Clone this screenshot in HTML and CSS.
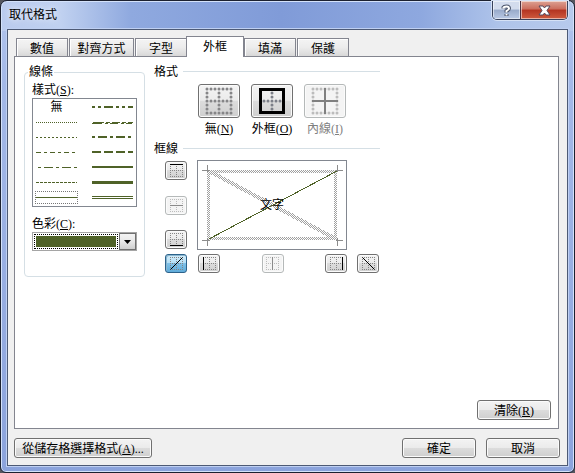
FILE: index.html
```html
<!DOCTYPE html>
<html lang="zh-Hant">
<head>
<meta charset="utf-8">
<title>取代格式</title>
<link rel="stylesheet" href="styles.css">
</head>
<body>
<svg class="defs" aria-hidden="true">
  <defs>
    <pattern id="hatch" width="2" height="2" patternUnits="userSpaceOnUse">
      <rect width="1" height="1" fill="#a0a0a0"/><rect x="1" y="1" width="1" height="1" fill="#a0a0a0"/>
    </pattern>
    <symbol id="cell" viewBox="0 0 13 13">
      <path d="M0 .5H13M0 6.5H13M0 12.5H13M.5 0V13M6.5 0V13M12.5 0V13" stroke="#858585" stroke-dasharray="1 1" fill="none"/>
    </symbol>
  </defs>
</svg>
<div class="window">
  <header class="titlebar">
    <h1>取代格式</h1>
    <div class="caption">
      <button class="help" type="button" aria-label="說明"><svg width="13" height="13" viewBox="0 0 13 13"><path d="M3.500 4.500V3.500Q4 2.500 6.500 2.500T9 4.500Q9 5.500 6.500 7V8.500M6.500 10V12" fill="none" stroke="#4c566c" stroke-width="4"/><path d="M3.500 4.500V3.500Q4 2.500 6.500 2.500T9 4.500Q9 5.500 6.500 7V8.500M6.500 10V11.500" fill="none" stroke="#fff" stroke-width="2"/></svg></button>
      <button class="close" type="button" aria-label="關閉"><svg width="13" height="11" viewBox="0 0 13 11"><path d="M1 1H5L6.500 3L8 1H12L9 5.500L12 10H8L6.500 8L5 10H1L4 5.500Z" fill="#fff" stroke="#55475a"/></svg></button>
    </div>
  </header>
  <main class="client">
    <nav class="tabs" role="tablist">
      <button role="tab" type="button">數值</button>
      <button role="tab" type="button" class="wide">對齊方式</button>
      <button role="tab" type="button">字型</button>
      <button role="tab" type="button" class="active" aria-selected="true">外框</button>
      <button role="tab" type="button">填滿</button>
      <button role="tab" type="button">保護</button>
    </nav>
    <section class="panel">
      <div class="columns">
        <fieldset class="lines">
          <legend>線條</legend>
          <div class="label" id="style-label">樣式(<u>S</u>):</div>
          <div class="styles" role="listbox" aria-labelledby="style-label">
            <button role="option" type="button">無</button>
            <button role="option" type="button" aria-label="粗兩點虛線"><svg width="41" height="9"><path d="M0 4H41" stroke-width="2" stroke-dasharray="3 3 3 3 9 3"/></svg></button>
            <button role="option" type="button" aria-label="點線"><svg width="41" height="9"><path d="M0 4.500H41" stroke-dasharray="1 1"/></svg></button>
            <button role="option" type="button" aria-label="斜虛線"><svg width="41" height="9"><path d="M1 4.500H12M14 4.500H18M20 4.500H28M30 4.500H34M36 4.500H41M0 5.500H10M13 5.500H16M18 5.500H26M29 5.500H32M34 5.500H40"/></svg></button>
            <button role="option" type="button" aria-label="短虛線"><svg width="41" height="9"><path d="M0 4.500H41" stroke-dasharray="2 2"/></svg></button>
            <button role="option" type="button" aria-label="粗一點虛線"><svg width="41" height="9"><path d="M0 4H41" stroke-width="2" stroke-dasharray="3 3 9 3"/></svg></button>
            <button role="option" type="button" aria-label="一點虛線"><svg width="41" height="9"><path d="M0 4.500H41" stroke-dasharray="5 3 3 3"/></svg></button>
            <button role="option" type="button" aria-label="粗虛線"><svg width="41" height="9"><path d="M0 4H41" stroke-width="2" stroke-dasharray="9 3"/></svg></button>
            <button role="option" type="button" aria-label="兩點虛線"><svg width="41" height="9"><path d="M2 4.500H41" stroke-dasharray="3 3 9 3"/></svg></button>
            <button role="option" type="button" aria-label="中實線"><svg width="41" height="9"><path d="M0 4H41" stroke-width="2"/></svg></button>
            <button role="option" type="button" aria-label="虛線"><svg width="41" height="9"><path d="M0 4.500H41" stroke-dasharray="3 1"/></svg></button>
            <button role="option" type="button" aria-label="粗實線"><svg width="41" height="9"><path d="M0 4.500H41" stroke-width="3"/></svg></button>
            <button role="option" type="button" class="chosen" aria-selected="true" aria-label="細實線"><svg width="41" height="9"><path d="M0 4.500H41"/></svg></button>
            <button role="option" type="button" aria-label="雙線"><svg width="41" height="9"><path d="M0 3.500H41M0 5.500H41"/></svg></button>
          </div>
          <label class="label" for="color">色彩(<u>C</u>):</label>
          <div class="combo">
            <select id="color"><option value="#4f6228"></option></select>
            <span class="drop"><svg width="7" height="4" viewBox="0 0 7 4"><path d="M0 0H7L3.500 4Z"/></svg></span>
          </div>
        </fieldset>
        <div class="borders">
          <h2>格式</h2>
          <div class="presets">
            <div class="preset">
              <button type="button" id="none" aria-label="無"><svg width="28" height="28" viewBox="0 0 28 28"><path d="M2 2H26.100M2 14H26.100M2 26H26.100M2 2V26.100M14 2V26.100M26 2V26.100" stroke="#858587" stroke-width="3" stroke-linecap="round" stroke-dasharray="0 4"/></svg></button>
              <label for="none">無(<u>N</u>)</label>
            </div>
            <div class="preset">
              <button type="button" id="outline" aria-label="外框"><svg width="28" height="28" viewBox="0 0 28 28"><path d="M2.500 2.500H25.500V25.500H2.500Z" fill="none" stroke="#000" stroke-width="3"/><path d="M6 14H22.100M14 6V22.100" stroke="#7c7f88" stroke-width="3" stroke-linecap="round" stroke-dasharray="0 4"/></svg></button>
              <label for="outline">外框(<u>O</u>)</label>
            </div>
            <div class="preset off">
              <button type="button" id="inside" aria-label="內線" disabled><svg width="28" height="28" viewBox="0 0 28 28"><path d="M2 2H26.100M2 26H26.100M2 2V26.100M26 2V26.100" stroke="#bcbcbc" stroke-width="3" stroke-linecap="round" stroke-dasharray="0 4"/><path d="M1 14H27M14 1V27" stroke="#808080" stroke-width="2"/></svg></button>
              <label for="inside">內線(<u>I</u>)</label>
            </div>
          </div>
          <h2>框線</h2>
          <div class="edges">
            <div class="rows">
              <button class="edge" type="button" aria-label="上框線"><svg width="13" height="13"><use href="#cell" width="13" height="13"/><path d="M0 .5H13" stroke="#000"/></svg></button>
              <button class="edge" type="button" aria-label="水平內框線" disabled><svg width="13" height="13"><use href="#cell" width="13" height="13"/><path d="M0 6.500H13" stroke="#222"/></svg></button>
              <button class="edge" type="button" aria-label="下框線"><svg width="13" height="13"><use href="#cell" width="13" height="13"/><path d="M0 12.500H13" stroke="#000"/></svg></button>
            </div>
            <div class="preview">
              <svg viewBox="0 0 148 88" width="148" height="88" shape-rendering="crispEdges">
                <g fill="none" stroke="url(#hatch)" stroke-width="3"><path d="M10.500 10.500H137.500V77.500H10.500Z"/><path d="M11 10L138 78" stroke-width="4"/></g>
                <path d="M9.500 4V11M4 9.500H12M139.500 4V11M138 9.500H145M9.500 77V85M4 79.500H12M139.500 77V85M138 79.500H145" stroke="#8c8c8c"/>
                <path d="M11 78L139 10" stroke="#4f6228"/>
                <text x="74" y="48" text-anchor="middle">文字</text>
              </svg>
            </div>
            <button class="edge pressed" type="button" aria-label="右斜框線"><svg width="13" height="13"><use href="#cell" width="13" height="13"/><path d="M.5 12.500L12.500 .5" stroke="#000"/></svg></button>
            <div class="cols">
              <button class="edge" type="button" aria-label="左框線"><svg width="13" height="13"><use href="#cell" width="13" height="13"/><path d="M.5 0V13" stroke="#000"/></svg></button>
              <button class="edge" type="button" aria-label="垂直內框線" disabled><svg width="13" height="13"><use href="#cell" width="13" height="13"/><path d="M6.500 0V13" stroke="#222"/></svg></button>
              <button class="edge" type="button" aria-label="右框線"><svg width="13" height="13"><use href="#cell" width="13" height="13"/><path d="M12.500 0V13" stroke="#000"/></svg></button>
            </div>
            <button class="edge" type="button" aria-label="左斜框線"><svg width="13" height="13"><use href="#cell" width="13" height="13"/><path d="M.5 .5L12.500 12.500" stroke="#000"/></svg></button>
          </div>
        </div>
      </div>
      <button class="push clear" type="button">清除(<u>R</u>)</button>
    </section>
    <footer>
      <button class="push from-cell" type="button">從儲存格選擇格式(<u>A</u>)...</button>
      <button class="push" type="button">確定</button>
      <button class="push" type="button">取消</button>
    </footer>
  </main>
</div>
</body>
</html>
```
FILE: styles.css
```css
* {
  box-sizing: border-box;
}

body {
  margin: 0;
  background: #55565e;
  color: #000;
  font: 12px/16px "Liberation Serif", "Noto Sans CJK TC", sans-serif;
}

button,
select {
  margin: 0;
  padding: 0;
  color: inherit;
  font: inherit;
}

svg {
  display: block;
}

.defs {
  position: absolute;
  width: 0;
  height: 0;
}

.window {
  display: flex;
  flex-direction: column;
  min-height: 100vh;
  padding: 0 6px 6px;
  border: 1px solid #1c2130;
  border-radius: 7px 7px 6px 6px;
  background: linear-gradient(90deg, #bacbee 0, #c0d1f0 60px, #8fa9df 130px, #809bd8 280px, #8ea8df 420px, #afc4ea 500px, #b7caec 100%) 0 0 / 100% 30px no-repeat,
    linear-gradient(#b3c6ed, #a4b9e8 80px, #8ba3dc);
  box-shadow: inset 0 0 0 1px #d4e2fa;
}

.titlebar {
  display: flex;
  justify-content: space-between;
  height: 28px;
  padding-left: 2px;
}

h1 {
  margin: 5px 0 0;
  font: 12px/16px "Noto Sans CJK TC", sans-serif;
  text-shadow: 0 0 6px #fff;
}

.caption {
  display: flex;
  height: 19px;
  border: 1px solid #39435c;
  border-top: 0;
  border-radius: 0 0 5px 5px;
  box-shadow: 0 0 0 1px #d5e1f5;
  overflow: hidden;
}

.caption button {
  display: grid;
  place-items: center;
  border: 0;
  box-shadow: inset 0 0 0 1px #ffffff88;
}

.help {
  width: 27px;
  background: linear-gradient(#d3dced 45%, #98aaca 50%, #bac9e5);
}

.caption .close {
  width: 47px;
  border-left: 1px solid #4d3240;
  background: linear-gradient(#dda294, #cb6c5c 45%, #b33421 50%, #cf5b3f);
}

.client {
  display: flex;
  flex: 1;
  flex-direction: column;
  padding: 6px 7px 7px 6px;
  border: 1px solid #4d5a75;
  background: #f0f0f0;
  box-shadow: 0 0 0 1px #bfd0f2;
}

.tabs {
  display: flex;
  align-items: flex-end;
  gap: 1px;
  padding-left: 2px;
}

.tabs button {
  width: 52px;
  height: 18px;
  padding-top: 2px;
  border: 1px solid #83858f;
  border-bottom: 0;
  background: linear-gradient(#f4f4f4, #ececec 50%, #d8d8d8);
  box-shadow: inset 1px 1px #fff;
}

.tabs .wide {
  width: 65px;
}

.tabs .active {
  z-index: 1;
  width: 58px;
  height: 21px;
  margin: 0 -1px -1px -2px;
  padding-top: 0;
  background: #fff;
}

.panel {
  display: flex;
  flex: 1;
  flex-direction: column;
  justify-content: space-between;
  margin-right: 1px;
  padding: 7px 7px 8px 9px;
  border: 1px solid #83858f;
  background: #fff;
}

.columns {
  display: flex;
  align-items: flex-start;
  gap: 9px;
}

.lines {
  width: 121px;
  margin: 0;
  padding: 2px 7px 25px;
  border: 1px solid #d5dfe5;
  border-radius: 4px;
}

legend {
  margin-left: -4px;
  padding: 0 1px;
}

.label {
  display: block;
}

.styles {
  display: grid;
  grid-template-columns: 1fr 1fr;
  grid-auto-rows: 15px;
  column-gap: 13px;
  align-items: center;
  margin-bottom: 9px;
  padding: 1px 2px;
  border: 1px solid #828790;
}

.styles button {
  height: 13px;
  border: 1px solid transparent;
  background: none;
  line-height: 11px;
}

.styles path {
  stroke: #4f6228;
}

.styles .chosen {
  border: 1px dotted #777;
}

.combo {
  display: flex;
  height: 19px;
  border: 1px solid #a5a5a5;
}

.combo select {
  flex: 1;
  min-width: 0;
  margin: 1px;
  padding: 1px;
  border: 1px dotted #000;
  border-radius: 0;
  appearance: none;
  background: #4f6228 content-box;
}

.drop {
  display: grid;
  place-items: center;
  width: 17px;
  border: 1px solid #707070;
  background: linear-gradient(#f3f3f3, #e8e8e8 50%, #cfcfcf);
}

.borders {
  width: 226px;
}

h2 {
  display: flex;
  align-items: center;
  gap: 5px;
  margin: 0;
  font: inherit;
}

h2::after {
  content: "";
  flex: 1;
  height: 1px;
  margin-bottom: 1px;
  background: #d5dfe5;
}

.presets {
  display: flex;
  gap: 11px;
  margin: 4px 0 4px 44px;
}

.preset {
  display: flex;
  flex-direction: column;
  align-items: center;
  gap: 3px;
  width: 42px;
  white-space: nowrap;
}

.preset button,
.edge,
.push {
  border: 1px solid #707070;
  border-radius: 3px;
  background: linear-gradient(#f3f3f3, #ebebeb 48%, #dcdcdc 50%, #cfcfcf);
  box-shadow: inset 0 0 0 1px #fbfbfb;
}

.preset button {
  display: grid;
  place-items: center;
  width: 42px;
  height: 34px;
}

.preset.off {
  color: #808080;
}

.preset.off button,
.edge:disabled {
  border-color: #b5b9b9;
  background: #f4f4f4;
}

.edges {
  display: grid;
  grid-template-columns: 22px 150px 22px;
  gap: 4px 10px;
  margin: 3px 0 0 11px;
}

.rows,
.cols {
  display: flex;
  justify-content: space-between;
}

.rows {
  flex-direction: column;
  padding: 1px 0;
}

.cols {
  padding-left: 1px;
}

.edge {
  display: grid;
  place-items: center;
  width: 22px;
  height: 19px;
}

.edge:disabled svg {
  opacity: 0.5;
}

.edge.pressed {
  grid-column: 1;
  border-color: #2c628b;
  background: linear-gradient(#d5eefb, #b4def5 48%, #80c1e8 50%, #5fabd9);
  box-shadow: inset 1px 1px #8ab6cf;
}

.preview {
  border: 1px solid #828790;
}

.push {
  width: 74px;
  height: 20px;
  padding-top: 2px;
}

.clear {
  align-self: flex-end;
}

footer {
  display: flex;
  gap: 10px;
  padding-top: 9px;
}

.from-cell {
  width: 138px;
  margin-right: auto;
}
```
